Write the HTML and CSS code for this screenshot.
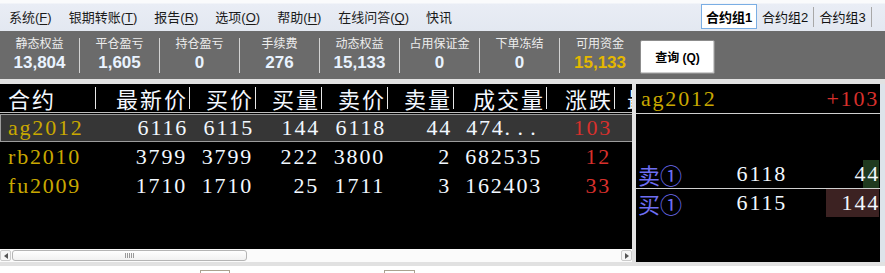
FILE: index.html
```html
<!DOCTYPE html>
<html>
<head>
<meta charset="utf-8">
<link rel="stylesheet" href="styles.css">
</head>
<body>
<div class="menubar">
  <div class="menu">
    <span>系统(<u>F</u>)</span>
    <span>银期转账(<u>T</u>)</span>
    <span>报告(<u>R</u>)</span>
    <span>选项(<u>O</u>)</span>
    <span>帮助(<u>H</u>)</span>
    <span>在线问答(<u>Q</u>)</span>
    <span>快讯</span>
  </div>
  <div class="tabs">
    <div class="tab active">合约组1</div>
    <div class="tab">合约组2</div>
    <div class="tab">合约组3</div>
  </div>
</div>

<div class="stats">
  <div class="stat"><div class="lbl">静态权益</div><div class="val">13,804</div></div><div class="sep"></div>
  <div class="stat"><div class="lbl">平仓盈亏</div><div class="val">1,605</div></div><div class="sep"></div>
  <div class="stat"><div class="lbl">持仓盈亏</div><div class="val">0</div></div><div class="sep"></div>
  <div class="stat"><div class="lbl">手续费</div><div class="val">276</div></div><div class="sep"></div>
  <div class="stat"><div class="lbl">动态权益</div><div class="val">15,133</div></div><div class="sep"></div>
  <div class="stat"><div class="lbl">占用保证金</div><div class="val">0</div></div><div class="sep"></div>
  <div class="stat"><div class="lbl">下单冻结</div><div class="val">0</div></div><div class="sep"></div>
  <div class="stat wide"><div class="lbl">可用资金</div><div class="val gold">15,133</div></div>
  <div class="btn">查询 (Q)</div>
</div>
<div class="strip"></div>

<div class="main">
  <div class="left">
    <div class="grid">
      <div class="row hrow">
        <div class="h first">合约</div>
        <div class="h">最新价</div>
        <div class="h">买价</div>
        <div class="h">买量</div>
        <div class="h">卖价</div>
        <div class="h">卖量</div>
        <div class="h">成交量</div>
        <div class="h">涨跌</div>
        <div class="h last">最高</div>
      </div>
      <div class="row drow sel">
        <div class="name">ag2012</div>
        <div class="num">6116</div>
        <div class="num">6115</div>
        <div class="num">144</div>
        <div class="num">6118</div>
        <div class="num">44</div>
        <div class="num vol">474<span class="dots">...</span></div>
        <div class="num up">103</div>
        <div></div>
      </div>
      <div class="row drow">
        <div class="name">rb2010</div>
        <div class="num">3799</div>
        <div class="num">3799</div>
        <div class="num">222</div>
        <div class="num">3800</div>
        <div class="num">2</div>
        <div class="num vol">682535</div>
        <div class="num up">12</div>
        <div></div>
      </div>
      <div class="row drow">
        <div class="name">fu2009</div>
        <div class="num">1710</div>
        <div class="num">1710</div>
        <div class="num">25</div>
        <div class="num">1711</div>
        <div class="num">3</div>
        <div class="num vol">162403</div>
        <div class="num up">33</div>
        <div></div>
      </div>
    </div>
    <div class="hscroll">
      <div class="arrow"><span class="tri-l"></span></div>
      <div class="thumb"><span class="grip"></span></div>
      <div class="track"></div>
      <div class="arrow"><span class="tri-r"></span></div>
    </div>
  </div>
  <div class="mid"></div>
  <div class="right">
    <div class="rhead">
      <span class="gold-t">ag2012</span>
      <span class="up">+103</span>
    </div>
    <div class="rspace"></div>
    <div class="qrow sell">
      <div class="qname">卖①</div>
      <div class="qprice">6118</div>
      <div class="qvol"><span class="bar green" style="width:16px"></span><span class="qtxt">44</span></div>
    </div>
    <div class="qrow buy">
      <div class="qname">买①</div>
      <div class="qprice">6115</div>
      <div class="qvol"><span class="bar red" style="width:53px"></span><span class="qtxt">144</span></div>
    </div>
  </div>
  <div class="edge"></div>
</div>

<div class="bottom">
  <div class="bgap"></div>
  <div class="bbtns">
    <div class="bb b1"></div>
    <div class="bb b2"></div>
  </div>
</div>
</body>
</html>
```

FILE: styles.css
```css
html, body {
  margin: 0;
  padding: 0;
}
body {
  width: 885px;
  height: 273px;
  overflow: hidden;
  background: #fff;
  font-family: "Liberation Sans", "Noto Sans CJK SC", sans-serif;
}

/* menu bar */
.menubar {
  height: 31px;
  display: flex;
  align-items: center;
  background: linear-gradient(#fafbfc 0, #fafbfc 3px, #e9edf5 4px, #e3e8f1 100%);
}
.menu {
  display: flex;
  gap: 17px;
  padding-left: 9px;
  font-size: 13px;
  color: #1b1b1b;
  margin-top: 2px;
}
.menu u {
  text-underline-offset: 2px;
}
.tabs {
  margin-left: auto;
  margin-right: 13px;
  display: flex;
  align-items: center;
  height: 25px;
  margin-top: 2px;
}
.tab {
  width: 58px;
  height: 20px;
  box-sizing: border-box;
  display: flex;
  align-items: center;
  justify-content: center;
  font-size: 13px;
  color: #111;
  border-right: 1px solid #a8a8a8;
}
.tab.active {
  width: 56px;
  height: 25px;
  border: 1px solid #7aaee4;
  background: #fff;
  font-weight: bold;
  color: #000;
}
.tab.active + .tab {
  width: 57px;
}

/* stats bar */
.stats {
  height: 48px;
  background: #6b6b6b;
  display: flex;
  align-items: center;
}
.stat {
  width: 79px;
  height: 48px;
  box-sizing: border-box;
  padding-top: 5px;
  display: flex;
  flex-direction: column;
  align-items: center;
}
.stat.wide {
  width: 80px;
}
.lbl {
  font-size: 12px;
  line-height: 16px;
  color: #ededed;
}
.val {
  font-size: 17px;
  font-weight: bold;
  line-height: 20px;
  margin-top: 1px;
  color: #e9f3ff;
}
.val.gold {
  color: #e4b800;
}
.sep {
  width: 1px;
  height: 35px;
  background: #d2d2d2;
}
.btn {
  width: 75px;
  height: 34px;
  margin-top: 3px;
  box-sizing: border-box;
  border: 1px solid #8c8c8c;
  box-shadow: inset -1px -1px 0 #cfcfcf, inset 1px 1px 0 #fff;
  border-radius: 2px;
  background: #fff;
  display: flex;
  align-items: center;
  justify-content: center;
  font-size: 12px;
  font-weight: bold;
  color: #000;
}
.strip {
  height: 5px;
  background: #e2e2e2;
}

/* main area */
.main {
  display: flex;
  height: 178px;
}
.left {
  width: 632px;
  display: flex;
  flex-direction: column;
}
.grid {
  height: 165px;
  background: #000;
  overflow: hidden;
}
.row {
  display: grid;
  grid-template-columns: 96px 94px 66px 66px 66px 66px 93px 68px 40px;
  width: 655px;
  box-sizing: border-box;
}
.hrow {
  height: 29px;
  align-items: center;
  border-bottom: 1px solid #bdbdbd;
  width: 632px;
  font-family: "Noto Sans CJK SC", sans-serif;
  font-size: 22px;
  color: #f4f8ff;
  overflow: hidden;
}
.h {
  height: 22px;
  line-height: 22px;
  border-right: 1px solid #e8e8e8;
  text-align: right;
  padding-right: 1px;
  letter-spacing: 2px;
  white-space: nowrap;
}
.h.first {
  text-align: left;
  padding-left: 8px;
}
.h.last {
  border-right: none;
  text-align: left;
  padding-left: 12px;
  overflow: hidden;
}
.drow {
  height: 29px;
  align-items: center;
  font-family: "Liberation Serif", serif;
  font-size: 22px;
  letter-spacing: 1.8px;
  color: #f2f8ff;
}
.drow.sel {
  margin-top: 1px;
  height: 28px;
  background: #363636;
  border-top: 1px solid #9c9c9c;
  border-bottom: 1px solid #9c9c9c;
  border-left: 1px solid #9c9c9c;
}
.name {
  padding-left: 8px;
  color: #c9a800;
}
.sel .name {
  padding-left: 7px;
}
.num {
  text-align: right;
  padding-right: 3px;
  white-space: nowrap;
}
.num.vol {
  padding-right: 5px;
}
.num.up {
  padding-right: 4px;
}
.dots {
  letter-spacing: 7.3px;
}
.up {
  color: #d8302c;
}

/* scrollbar */
.hscroll {
  height: 13px;
  background: #fbfbfb;
  display: flex;
  align-items: center;
}
.arrow {
  width: 11px;
  height: 11px;
  box-sizing: border-box;
  border: 1px solid #cbcbcb;
  border-radius: 2px;
  background: #f6f6f6;
  display: flex;
  align-items: center;
  justify-content: center;
}
.tri-l {
  width: 0;
  height: 0;
  border-top: 3px solid transparent;
  border-bottom: 3px solid transparent;
  border-right: 4px solid #555;
}
.tri-r {
  width: 0;
  height: 0;
  border-top: 3px solid transparent;
  border-bottom: 3px solid transparent;
  border-left: 4px solid #555;
}
.thumb {
  width: 235px;
  height: 11px;
  margin-left: 1px;
  box-sizing: border-box;
  border: 1px solid #b5b5b5;
  border-radius: 3px;
  background: linear-gradient(#ffffff, #f1f1f1);
  display: flex;
  align-items: center;
  justify-content: center;
}
.grip {
  width: 10px;
  height: 5px;
  background: repeating-linear-gradient(90deg, #9a9a9a 0 1px, transparent 1px 2px);
}
.track {
  flex: 1;
}

.mid {
  width: 4px;
  background: #e2e2e2;
}

/* right quote panel */
.right {
  width: 244px;
  background: #000;
  font-family: "Liberation Serif", serif;
  font-size: 22px;
  letter-spacing: 1.8px;
  color: #f2f8ff;
}
.rhead {
  height: 30px;
  box-sizing: border-box;
  border-bottom: 1px solid #cfcfcf;
  display: flex;
  justify-content: space-between;
  align-items: center;
  padding: 0 1px 0 5px;
}
.gold-t {
  color: #c9a800;
}
.rspace {
  height: 46px;
}
.qrow {
  display: grid;
  grid-template-columns: 70px 81px 1fr;
  height: 28px;
  align-items: center;
}
.qrow.sell {
  height: 29px;
  box-sizing: border-box;
  border-bottom: 1px solid #cfcfcf;
}
.qname {
  font-family: "Noto Sans CJK SC", sans-serif;
  letter-spacing: 0;
  color: #6e6ef2;
  padding-left: 2px;
  line-height: 28px;
}
.qprice {
  text-align: right;
}
.qvol {
  display: grid;
  height: 100%;
  align-items: center;
}
.bar {
  grid-area: 1 / 1;
  justify-self: end;
  height: 100%;
  margin-right: 1px;
}
.bar.green {
  background: #1f3a1f;
}
.bar.red {
  background: #3c2222;
}
.qtxt {
  grid-area: 1 / 1;
  justify-self: end;
  padding-right: 0;
}

.edge {
  width: 5px;
  background: #dde3ea;
}

/* bottom */
.bottom {
  height: 11px;
}
.bgap {
  height: 4px;
  background: #e1e1e1;
}
.bbtns {
  height: 7px;
  display: flex;
  align-items: flex-end;
}
.bb {
  height: 3px;
  border: 1px solid #aaa290;
  border-bottom: none;
  box-sizing: border-box;
}
.b1 {
  width: 30px;
  margin-left: 200px;
}
.b2 {
  width: 31px;
  margin-left: 154px;
}
```
